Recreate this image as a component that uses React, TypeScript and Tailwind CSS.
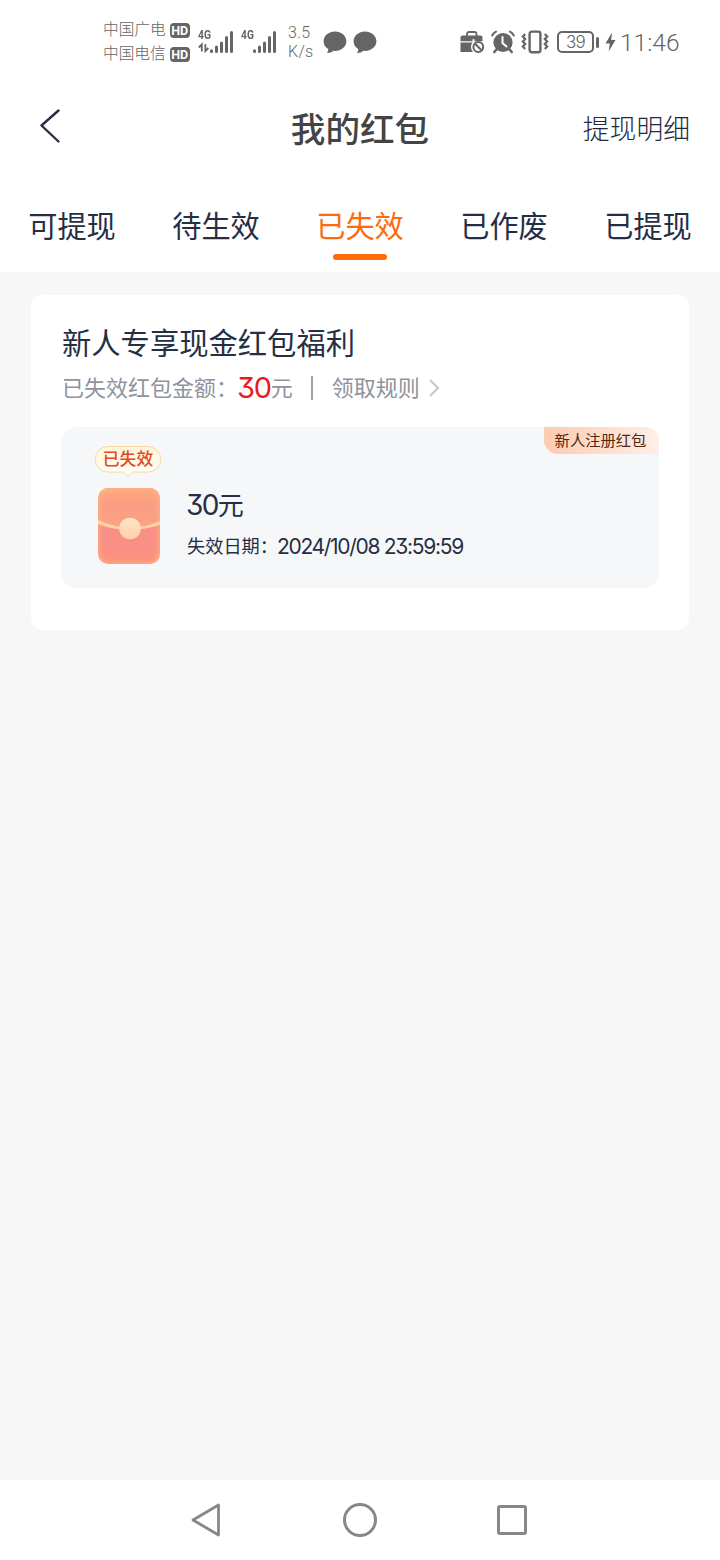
import React from "react";

const tabs = ["可提现", "待生效", "已失效", "已作废", "已提现"];
const ACTIVE_TAB = 2;

function HdBadge() {
  return (
    <span className="flex h-[15px] w-[20px] items-center justify-center rounded-[4px] bg-[#656565] font-[Roboto,sans-serif] text-[12.500px] leading-[15px] font-bold text-white">
      HD
    </span>
  );
}

function Carrier({ name }: { name: string }) {
  return (
    <div className="flex h-6 items-center gap-[4px]">
      <span className="relative top-[-1px] text-[15.7px] leading-6 font-light">{name}</span>
      <HdBadge />
    </div>
  );
}

function Signal({ transfer = false }: { transfer?: boolean }) {
  return (
    <div className="relative h-[24px] w-[36px]">
      <span className="absolute top-[-1px] left-0 origin-left scale-x-[0.82] font-[Roboto,sans-serif] text-[12.500px] leading-[12px] font-bold">
        4G
      </span>
      <svg className="absolute inset-0" width="36" height="24" viewBox="0 0 36 24" fill="none" stroke="#656565">
        {transfer && (
          <path d="M3.800 21.500V14.500L.8 17.500M7.400 14V21L10.400 18" strokeWidth="1.800" />
        )}
        <path
          d="M13.5 20.8V21.500M18.5 17V21.5M23.5 13V21.5M28.5 7.5V21.5M33.5 2.5V21.5"
          strokeWidth="3"
          strokeLinecap="round"
        />
      </svg>
    </div>
  );
}

function Bubble() {
  return (
    <svg width="24" height="23" viewBox="0 0 24 23" fill="#656565">
      <path d="M12 .5C5.7.5.6 4.900.6 10.200c0 3.400 1.700 6.100 4.600 7.800.2 1.500-.3 2.700-1.300 4 3 0 5-.8 6.500-2.200.5.1 1 .1 1.600.1 6.300 0 11.400-4.300 11.400-9.700S18.300.5 12 .5Z" />
    </svg>
  );
}

function Briefcase() {
  return (
    <svg width="25" height="24" viewBox="0 0 25 24" fill="none">
      <path d="M7 6V4.200Q7 2 9 2H14.500Q16.500 2 16.500 4.200V6" stroke="#656565" strokeWidth="1.800" />
      <path d="M2.500 5.500H20.500Q22.500 5.500 22.500 7.500V11.200H14.500V9.200H12.500V11.200H.5V7.500Q.5 5.500 2.500 5.500Z" fill="#656565" />
      <path d="M.5 12.500H12.500Q11 14.500 11 17Q11 20 13 22H.5Z" fill="#656565" />
      <circle cx="18.300" cy="17" r="4.900" stroke="#656565" strokeWidth="2" />
      <path d="M15 13.700L21.600 20.300" stroke="#656565" strokeWidth="2" />
    </svg>
  );
}

function Alarm() {
  return (
    <svg width="24" height="24" viewBox="0 0 24 24" fill="none" strokeLinecap="round">
      <circle cx="12" cy="12.500" r="9.600" fill="#656565" />
      <path d="M1.200 5.500Q2.500 2.800 5 1.600M22.800 5.500Q21.500 2.800 19 1.600" stroke="#656565" strokeWidth="2" />
      <path d="M5.500 19.500L3.300 22M18.500 19.500L20.700 22" stroke="#656565" strokeWidth="2.600" />
      <path d="M11.500 7V13L15.500 16.500" stroke="#fff" strokeWidth="2" />
    </svg>
  );
}

function Vibrate() {
  return (
    <svg width="28" height="24" viewBox="0 0 28 24" fill="none" stroke="#656565">
      <rect x="8.600" y="1.600" width="10.800" height="20.600" rx="2.200" strokeWidth="2.400" />
      <path
        d="M4.200 4L1.800 6.500L4.200 9L1.800 11.500L4.200 14L1.800 16.500L4.200 19M23.800 4L26.200 6.500L23.800 9L26.200 11.500L23.800 14L26.200 16.500L23.800 19"
        strokeWidth="2.200"
      />
    </svg>
  );
}

function StatusBar() {
  return (
    <div className="flex h-[84px] items-start pl-[103px] text-[#656565]">
      <div className="flex w-[94px] flex-col pt-[18px]">
        <Carrier name="中国广电" />
        <Carrier name="中国电信" />
      </div>
      <div className="ml-[1px] flex gap-[7px] pt-[30px]">
        <Signal transfer />
        <Signal />
      </div>
      <div className="ml-[11px] w-[26px] pt-[24px] font-[Roboto,sans-serif] text-[16px] leading-[18.500px] font-light tracking-[0.300px]">
        <div>3.5</div>
        <div>K/s</div>
      </div>
      <div className="ml-[9px] flex gap-[6px] pt-[31px]">
        <Bubble />
        <Bubble />
      </div>
      <div className="ml-[83px] flex items-center pt-[30px]">
        <Briefcase />
        <div className="ml-[6px]">
          <Alarm />
        </div>
        <div className="ml-[6px]">
          <Vibrate />
        </div>
        <div className="ml-[8px] flex h-[22px] w-[37px] items-center justify-center rounded-[5px] border-2 border-[#656565] font-[Inter,sans-serif] text-[17px] leading-[18px] font-light tracking-[-0.700px]">
          39
        </div>
        <div className="ml-[2px] h-[11px] w-[3px] rounded-full bg-[#656565]" />
        <svg className="ml-[6px]" width="11" height="20" viewBox="0 0 11 20" fill="#656565">
          <path d="M7 .5L.5 11.500H4.800L3.700 19.500L10.500 8H6.200Z" />
        </svg>
        <span className="relative top-[1px] ml-[4px] font-[Roboto,sans-serif] text-[24.500px] leading-[24px] font-light">11:46</span>
      </div>
    </div>
  );
}

function Header() {
  return (
    <header className="grid h-[88px] grid-cols-[1fr_auto_1fr] items-center pr-[30px] pl-[30px]">
      <div className="flex pb-[2px] pl-[8px]">
        <svg width="24" height="36" viewBox="0 0 24 36" fill="none" stroke="#262e44" strokeWidth="2.400" strokeLinecap="round" strokeLinejoin="round">
          <path d="M20.500 1.500L3.500 16.500L20.500 32.500" />
        </svg>
      </div>
      <h1 className="pb-[3px] text-[34.600px] leading-[40px] font-medium text-[#444444]">我的红包</h1>
      <div className="text-right text-[26.800px] leading-[40px] font-light text-[#232a3f]">提现明细</div>
    </header>
  );
}

function Tabs() {
  return (
    <nav className="grid h-[100px] grid-cols-5">
      {tabs.map((label, i) => (
        <div key={label} className="flex flex-col items-center pt-[32px]">
          <span
            className={
              i === ACTIVE_TAB
                ? "text-[29.200px] leading-[40px] font-normal text-[#ff6a0c]"
                : "text-[29.200px] leading-[40px] font-normal text-[#262e44]"
            }
          >
            {label}
          </span>
          {i === ACTIVE_TAB && <span className="mt-[10px] h-[6px] w-[54px] rounded-full bg-[#ff6a0c]" />}
        </div>
      ))}
    </nav>
  );
}

function Envelope() {
  return (
    <svg width="64" height="80" viewBox="0 0 64 80" fill="none">
      <defs>
        <linearGradient id="body" x1="0" y1="0" x2="0" y2="1">
          <stop offset="0" stopColor="#ff9e80" />
          <stop offset="0.600" stopColor="#f98e88" />
          <stop offset="1" stopColor="#fd917e" />
        </linearGradient>
        <linearGradient id="flap" x1="0" y1="0" x2="0" y2="1">
          <stop offset="0" stopColor="#ffab7e" />
          <stop offset="0.400" stopColor="#f99d84" />
          <stop offset="1" stopColor="#fba383" />
        </linearGradient>
        <linearGradient id="seal" x1="0" y1="0" x2="0" y2="1">
          <stop offset="0" stopColor="#ffe5c5" />
          <stop offset="1" stopColor="#ffd0aa" />
        </linearGradient>
        <clipPath id="outline">
          <rect x="1" y="2" width="62" height="76" rx="10.500" />
        </clipPath>
        <filter id="edge" x="-20%" y="-20%" width="140%" height="140%">
          <feGaussianBlur stdDeviation="2" />
        </filter>
      </defs>
      <g clipPath="url(#outline)">
        <rect x="1" y="1" width="62" height="78" fill="url(#body)" />
        <path d="M1 1H63V36Q32 51 1 34Z" fill="url(#flap)" />
        <rect x="1" y="2" width="62" height="76" rx="10.500" stroke="#ffb680" strokeWidth="3" filter="url(#edge)" />
        <path d="M0 33.500Q32 49 64 34.500V38.500Q32 50 0 37.500Z" fill="#ffd2a4" />
      </g>
      <circle cx="33" cy="44" r="10.500" fill="#f58a76" opacity="0.500" />
      <circle cx="33" cy="42.500" r="10.800" fill="url(#seal)" />
    </svg>
  );
}

function ExpiredBubble() {
  return (
    <div className="relative h-[33px] w-[68px]">
      <svg className="absolute inset-0" width="68" height="33" viewBox="0 0 68 33">
        <defs>
          <linearGradient id="tag" x1="0" y1="0" x2="0" y2="1">
            <stop offset="0" stopColor="#fff6d8" />
            <stop offset="1" stopColor="#fffefa" />
          </linearGradient>
        </defs>
        <path
          d="M14 1.500H54A12.800 12.800 0 0 1 54 27.100H38.500L34 31.500L29.500 27.100H14A12.800 12.800 0 0 1 14 1.500Z"
          fill="url(#tag)"
          stroke="#f6dba4"
          strokeWidth="1"
        />
      </svg>
      <span className="relative block text-center text-[16.800px] leading-[26px] font-medium text-[#e2491f]">已失效</span>
    </div>
  );
}

function RedPacket() {
  return (
    <div className="relative mt-[23px] flex h-[161px] rounded-[16px] bg-[#f5f7f9] pl-[33px]">
      <div className="flex w-[68px] flex-col items-center pt-[18px]">
        <ExpiredBubble />
        <div className="mt-[8px] ml-[2px]">
          <Envelope />
        </div>
      </div>
      <div className="ml-[24px] pt-[59px] text-[#262e44]">
        <div className="flex h-[38px] items-center leading-[38px]">
          <span className="font-[Inter,sans-serif] text-[28px] tracking-[-1.700px] [font-feature-settings:'cv09']">30</span>
          <span className="relative top-[-1px] text-[26px]">元</span>
        </div>
        <div className="mt-[8px] flex h-[28px] items-center leading-[28px]">
          <span className="relative top-[-1px] ml-[1px] text-[18.200px]">失效日期：</span>
          <span className="relative top-[1px] ml-[-1px] font-[Inter,sans-serif] text-[21px] tracking-[-1.300px] whitespace-nowrap [font-feature-settings:'cv09']">2024/10/08 23:59:59</span>
        </div>
      </div>
      <div className="absolute top-0 right-0 h-[27px] w-[115px] rounded-tr-[14px] rounded-bl-[14px] bg-gradient-to-r from-[#fdcbb0] to-[#ffeee8] pr-[2px] text-center text-[15.300px] leading-[25px] text-[#4f2a12]">
        新人注册红包
      </div>
    </div>
  );
}

function PacketCard() {
  return (
    <section className="mx-[31px] mt-[23px] h-[335px] rounded-[12px] bg-white px-[30px] pt-[26px]">
      <h2 className="pl-[1px] text-[29.300px] leading-[40px] font-normal text-[#262e44]">新人专享现金红包福利</h2>
      <div className="mt-[8px] flex h-[35px] items-center pl-[1px] text-[22px] leading-[35px] text-[#8f939d]">
        <span>已失效红包金额：</span>
        <span className="relative top-[1px] ml-[-1px] font-[Inter,sans-serif] text-[29px] tracking-[-1.300px] text-[#ec1b1b] [font-feature-settings:'cv09']">30</span>
        <span>元</span>
        <span className="mt-[3px] ml-[18px] h-[24px] w-[2px] bg-[#9b9ea7]" />
        <span className="ml-[19px]">领取规则</span>
        <svg className="mt-[2px] ml-[8px]" width="13" height="20" viewBox="0 0 13 20" fill="none" stroke="#c9c9cc" strokeWidth="2.200">
          <path d="M2 2L10 10L2 18" />
        </svg>
      </div>
      <RedPacket />
    </section>
  );
}

function NavBar() {
  return (
    <footer className="flex h-[80px] items-center bg-white pl-[190px]">
      <svg width="32" height="36" viewBox="0 0 32 36" fill="none" stroke="#878787" strokeWidth="2.800" strokeLinejoin="round">
        <path d="M3 18L28.500 3V33Z" />
      </svg>
      <div className="ml-[121px] size-[34px] rounded-full border-[3px] border-[#878787]" />
      <div className="ml-[120px] size-[30px] rounded-[3px] border-[3px] border-[#878787]" />
    </footer>
  );
}

export default function App() {
  return (
    <div className="flex h-[1560px] w-[720px] flex-col overflow-hidden bg-[#f7f7f7] font-['Noto_Sans_CJK_SC',sans-serif]">
      <div className="bg-white">
        <StatusBar />
        <Header />
        <Tabs />
      </div>
      <main className="flex-1">
        <PacketCard />
      </main>
      <NavBar />
    </div>
  );
}
